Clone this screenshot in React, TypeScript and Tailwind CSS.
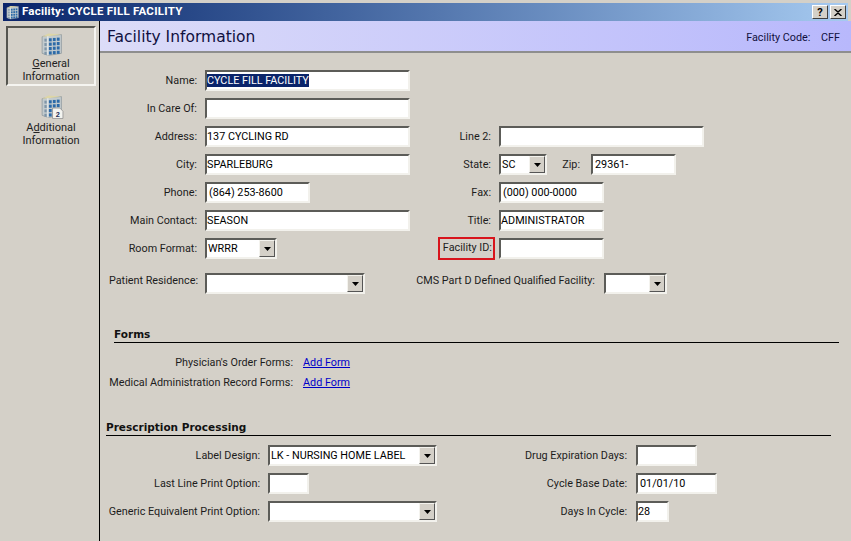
import type { ReactNode } from "react";

const inputEdge =
  "border-2 border-t-[#5c5c58] border-l-[#5c5c58] border-r-[#f2f1ec] border-b-[#f2f1ec] bg-white";

function Building({ size = 24, badge = false }: { size?: number; badge?: boolean }) {
  const cells = [];
  for (let r = 0; r < 4; r++) {
    for (let c = 0; c < 3; c++) {
      cells.push(<rect key={`${r}-${c}`} x={9.5 + c * 3.8} y={6 + r * 4.2 - c * 0.3} width="2.7" height="3" fill="#2c6aa8" />);
    }
    cells.push(<rect key={`l-${r}`} x={5.2} y={6.4 + r * 4.2} width="2.2" height="2.8" fill="#7f96a8" />);
  }
  return (
    <svg width={size} height={size} viewBox="0 0 24 24">
      <path d="M3 4.5 L9 3 L21.5 2.5 V20.5 L9 22.5 L3 20.5 Z" fill="#c3cbce" stroke="#8b969b" strokeWidth="0.7" />
      <path d="M3 4.5 L9 1.5 L21.5 2.5 L9 4 Z" fill="#ded6a6" />
      <path d="M8.5 4 V22.5" stroke="#eef0f0" strokeWidth="1" />
      {cells}
      {badge && (
        <g>
          <path d="M13 13.5 H20 L23 16.5 V23.5 H13 Z" fill="#f4f4f0" stroke="#8a8a8a" strokeWidth="0.7" />
          <text x="18" y="22" fontSize="7" fontWeight="700" textAnchor="middle" fill="#1a2a55" fontFamily="'Liberation Sans', sans-serif">2</text>
        </g>
      )}
    </svg>
  );
}

function Field({ w, value, selected, indent }: { w: string; value?: string; selected?: boolean; indent?: boolean }) {
  return (
    <div className={`${w} h-[21px] shrink-0 ${inputEdge} flex items-center overflow-hidden ${selected ? "" : "pt-[1px]"} ${indent ? "pl-[2px]" : "pl-[0px]"} whitespace-nowrap text-black`}>
      {selected ? <span className="bg-[#0a246a] text-white leading-[13px]">{value}</span> : value}
    </div>
  );
}

function Combo({ w, value }: { w: string; value?: string }) {
  return (
    <div className={`${w} h-[21px] shrink-0 ${inputEdge} flex items-center justify-between whitespace-nowrap text-black`}>
      <span className="pl-[1px] pt-[1px]">{value}</span>
      <span className="h-[17px] w-[16px] shrink-0 flex items-center justify-center bg-[#d4d0c8] border border-t-[#f4f3ee] border-l-[#f4f3ee] border-r-[#555] border-b-[#555]">
        <svg width="7" height="4" viewBox="0 0 7 4"><path d="M0 0H7L3.5 4Z" fill="#000" /></svg>
      </span>
    </div>
  );
}

function Label({ w, children, className = "" }: { w: string; children: ReactNode; className?: string }) {
  return <div className={`${w} shrink-0 text-right whitespace-nowrap ${className}`}>{children}</div>;
}

function Row({ left, right, leftW = "w-[310px]" }: { left: ReactNode; right?: ReactNode; leftW?: string }) {
  return (
    <div className="h-[28px] flex items-start">
      <div className={`${leftW} shrink-0 flex items-center h-[21px]`}>{left}</div>
      <div className="flex items-center h-[21px]">{right}</div>
    </div>
  );
}

function Section({ className, children }: { className: string; children: ReactNode }) {
  return <div className={`h-[17px] border-b border-black font-bold text-[10.5px] text-[#111] leading-[16px] font-['DejaVu_Sans',sans-serif] ${className}`}>{children}</div>;
}

function AddForm({ label }: { label: string }) {
  return (
    <div className="flex gap-[10px]">
      <Label w="w-[193px]">{label}</Label>
      <span className="text-[#0000c8] underline">Add Form</span>
    </div>
  );
}

const mainLabel = "mr-[8px] translate-y-[1px]";
const rxLabel = "mr-[8px] translate-y-[1px]";
const rxRight = "mr-[9px] translate-y-[1px]";

export default function App() {
  return (
    <div className="w-[851px] h-[541px] overflow-hidden bg-[#d4d0c8] flex flex-col text-[10.8px] text-[#1c1c1c] font-['Roboto','Noto_Sans',sans-serif]">
      {/* Title bar */}
      <div className="mt-[3px] ml-[3px] mr-[3px] h-[18px] shrink-0 flex items-center justify-between bg-gradient-to-r from-[#0a246a] to-[#a6caf0] pl-[2px] pr-[2px]">
        <div className="flex items-center gap-[2px] text-white font-bold text-[11.5px] tracking-[0.25px]">
          <Building size={15} />
          <span>Facility: CYCLE FILL FACILITY</span>
        </div>
        <div className="flex gap-[2px]">
          <div className="h-[14px] w-[16px] bg-[#d4d0c8] border border-t-white border-l-white border-r-[#404040] border-b-[#404040] flex items-center justify-center font-bold text-[11px] leading-none text-black">?</div>
          <div className="h-[14px] w-[16px] bg-[#d4d0c8] border border-t-white border-l-white border-r-[#404040] border-b-[#404040] flex items-center justify-center">
            <svg width="8" height="7" viewBox="0 0 8 7"><path d="M0.5 0L4 3L7.5 0M0.5 7L4 4L7.5 7" stroke="#000" strokeWidth="1.4" fill="none" /></svg>
          </div>
        </div>
      </div>

      <div className="flex flex-1 min-h-0">
        {/* Sidebar */}
        <div className="w-[100px] shrink-0 border-r border-black pt-[5px] pl-[6px] flex flex-col text-[#222] leading-[13px] text-[11px]">
          <div className="h-[60px] w-[90px] flex flex-col items-center border-2 border-t-[#55554f] border-l-[#55554f] border-r-[#f5f4f0] border-b-[#f5f4f0]">
            <div className="h-[29px] pt-[4px]"><Building size={25} /></div>
            <div><span className="underline">G</span>eneral</div>
            <div>Information</div>
          </div>
          <div className="mt-[5px] h-[62px] w-[90px] flex flex-col items-center border-2 border-transparent">
            <div className="h-[28px] pt-[1px]"><Building size={25} badge /></div>
            <div>A<span className="underline">d</span>ditional</div>
            <div>Information</div>
          </div>
        </div>

        <div className="flex-1 min-w-0 flex flex-col">
          {/* Header */}
          <div className="h-[32px] shrink-0 flex items-center justify-between pt-[4px] pl-[7px] pr-[11px] bg-gradient-to-r from-[#dcdcf8] to-[#b8b8fc] border-b-2 border-[#8e8e8e] text-[#101040]">
            <span className="text-[15.5px] font-['DejaVu_Sans',sans-serif]">Facility Information</span>
            <span>Facility Code:&nbsp;&nbsp;&nbsp; CFF</span>
          </div>

          {/* Main form */}
          <div className="pt-[17px]">
            <Row left={<><Label w="w-[97px]" className={mainLabel}>Name:</Label><Field w="w-[205px]" value="CYCLE FILL FACILITY" selected /></>} />
            <Row left={<><Label w="w-[97px]" className={mainLabel}>In Care Of:</Label><Field w="w-[205px]" /></>} />
            <Row
              left={<><Label w="w-[97px]" className={mainLabel}>Address:</Label><Field w="w-[205px]" value="137 CYCLING RD" /></>}
              right={<><Label w="w-[81px]" className={mainLabel}>Line 2:</Label><Field w="w-[205px]" /></>}
            />
            <Row
              left={<><Label w="w-[97px]" className={mainLabel}>City:</Label><Field w="w-[205px]" value="SPARLEBURG" /></>}
              right={
                <>
                  <Label w="w-[81px]" className={mainLabel}>State:</Label>
                  <Combo w="w-[48px]" value=" SC" />
                  <Label w="w-[33px]" className="mr-[11px] translate-y-[1px]">Zip:</Label>
                  <Field w="w-[85px]" value="29361-" indent />
                </>
              }
            />
            <Row
              left={<><Label w="w-[97px]" className={mainLabel}>Phone:</Label><Field w="w-[105px]" value="(864) 253-8600" indent /></>}
              right={<><Label w="w-[81px]" className={mainLabel}>Fax:</Label><Field w="w-[105px]" value="(000) 000-0000" indent /></>}
            />
            <Row
              left={<><Label w="w-[97px]" className={mainLabel}>Main Contact:</Label><Field w="w-[205px]" value="SEASON" /></>}
              right={<><Label w="w-[81px]" className={mainLabel}>Title:</Label><Field w="w-[105px]" value="ADMINISTRATOR" /></>}
            />
            <Row
              left={<><Label w="w-[97px]" className={mainLabel}>Room Format:</Label><Combo w="w-[72px]" value="WRRR" /></>}
              right={
                <>
                  <div className="w-[28px] shrink-0" />
                  <div className="h-[23px] w-[57px] shrink-0 border-2 border-[#d8141c] flex items-center justify-end whitespace-nowrap pr-[1px] mr-[4px]">Facility ID:</div>
                  <Field w="w-[105px]" />
                </>
              }
            />

            {/* Patient residence */}
            <div className="mt-[7px] h-[21px] flex items-center">
              <Label w="w-[98px]" className="mr-[7px] -translate-y-[2px]">Patient Residence:</Label>
              <Combo w="w-[160px]" />
              <Label w="w-[230px]" className="-translate-y-[2px]">CMS Part D Defined Qualified Facility:</Label>
              <div className="w-[9px] shrink-0" />
              <Combo w="w-[63px]" />
            </div>

            {/* Forms */}
            <Section className="mt-[32px] ml-[14px] mr-[12px]">Forms</Section>
            <div className="mt-[13px] flex flex-col gap-[7px] leading-[13px]">
              <AddForm label="Physician's Order Forms:" />
              <AddForm label="Medical Administration Record Forms:" />
            </div>

            {/* Prescription processing */}
            <Section className="mt-[30px] ml-[6px] mr-[20px]">Prescription Processing</Section>
            <div className="mt-[9px]">
              <Row
                leftW="w-[337px]"
                left={<><Label w="w-[160px]" className={rxLabel}>Label Design:</Label><Combo w="w-[169px]" value="LK - NURSING HOME LABEL" /></>}
                right={<><Label w="w-[190px]" className={rxRight}>Drug Expiration Days:</Label><Field w="w-[61px]" /></>}
              />
              <Row
                leftW="w-[337px]"
                left={<><Label w="w-[160px]" className={rxLabel}>Last Line Print Option:</Label><Field w="w-[41px]" /></>}
                right={<><Label w="w-[190px]" className={rxRight}>Cycle Base Date:</Label><Field w="w-[81px]" value="01/01/10" indent /></>}
              />
              <Row
                leftW="w-[337px]"
                left={<><Label w="w-[160px]" className={rxLabel}>Generic Equivalent Print Option:</Label><Combo w="w-[169px]" /></>}
                right={<><Label w="w-[190px]" className={rxRight}>Days In Cycle:</Label><Field w="w-[33px]" value="28" /></>}
              />
            </div>
          </div>
        </div>
      </div>
    </div>
  );
}
